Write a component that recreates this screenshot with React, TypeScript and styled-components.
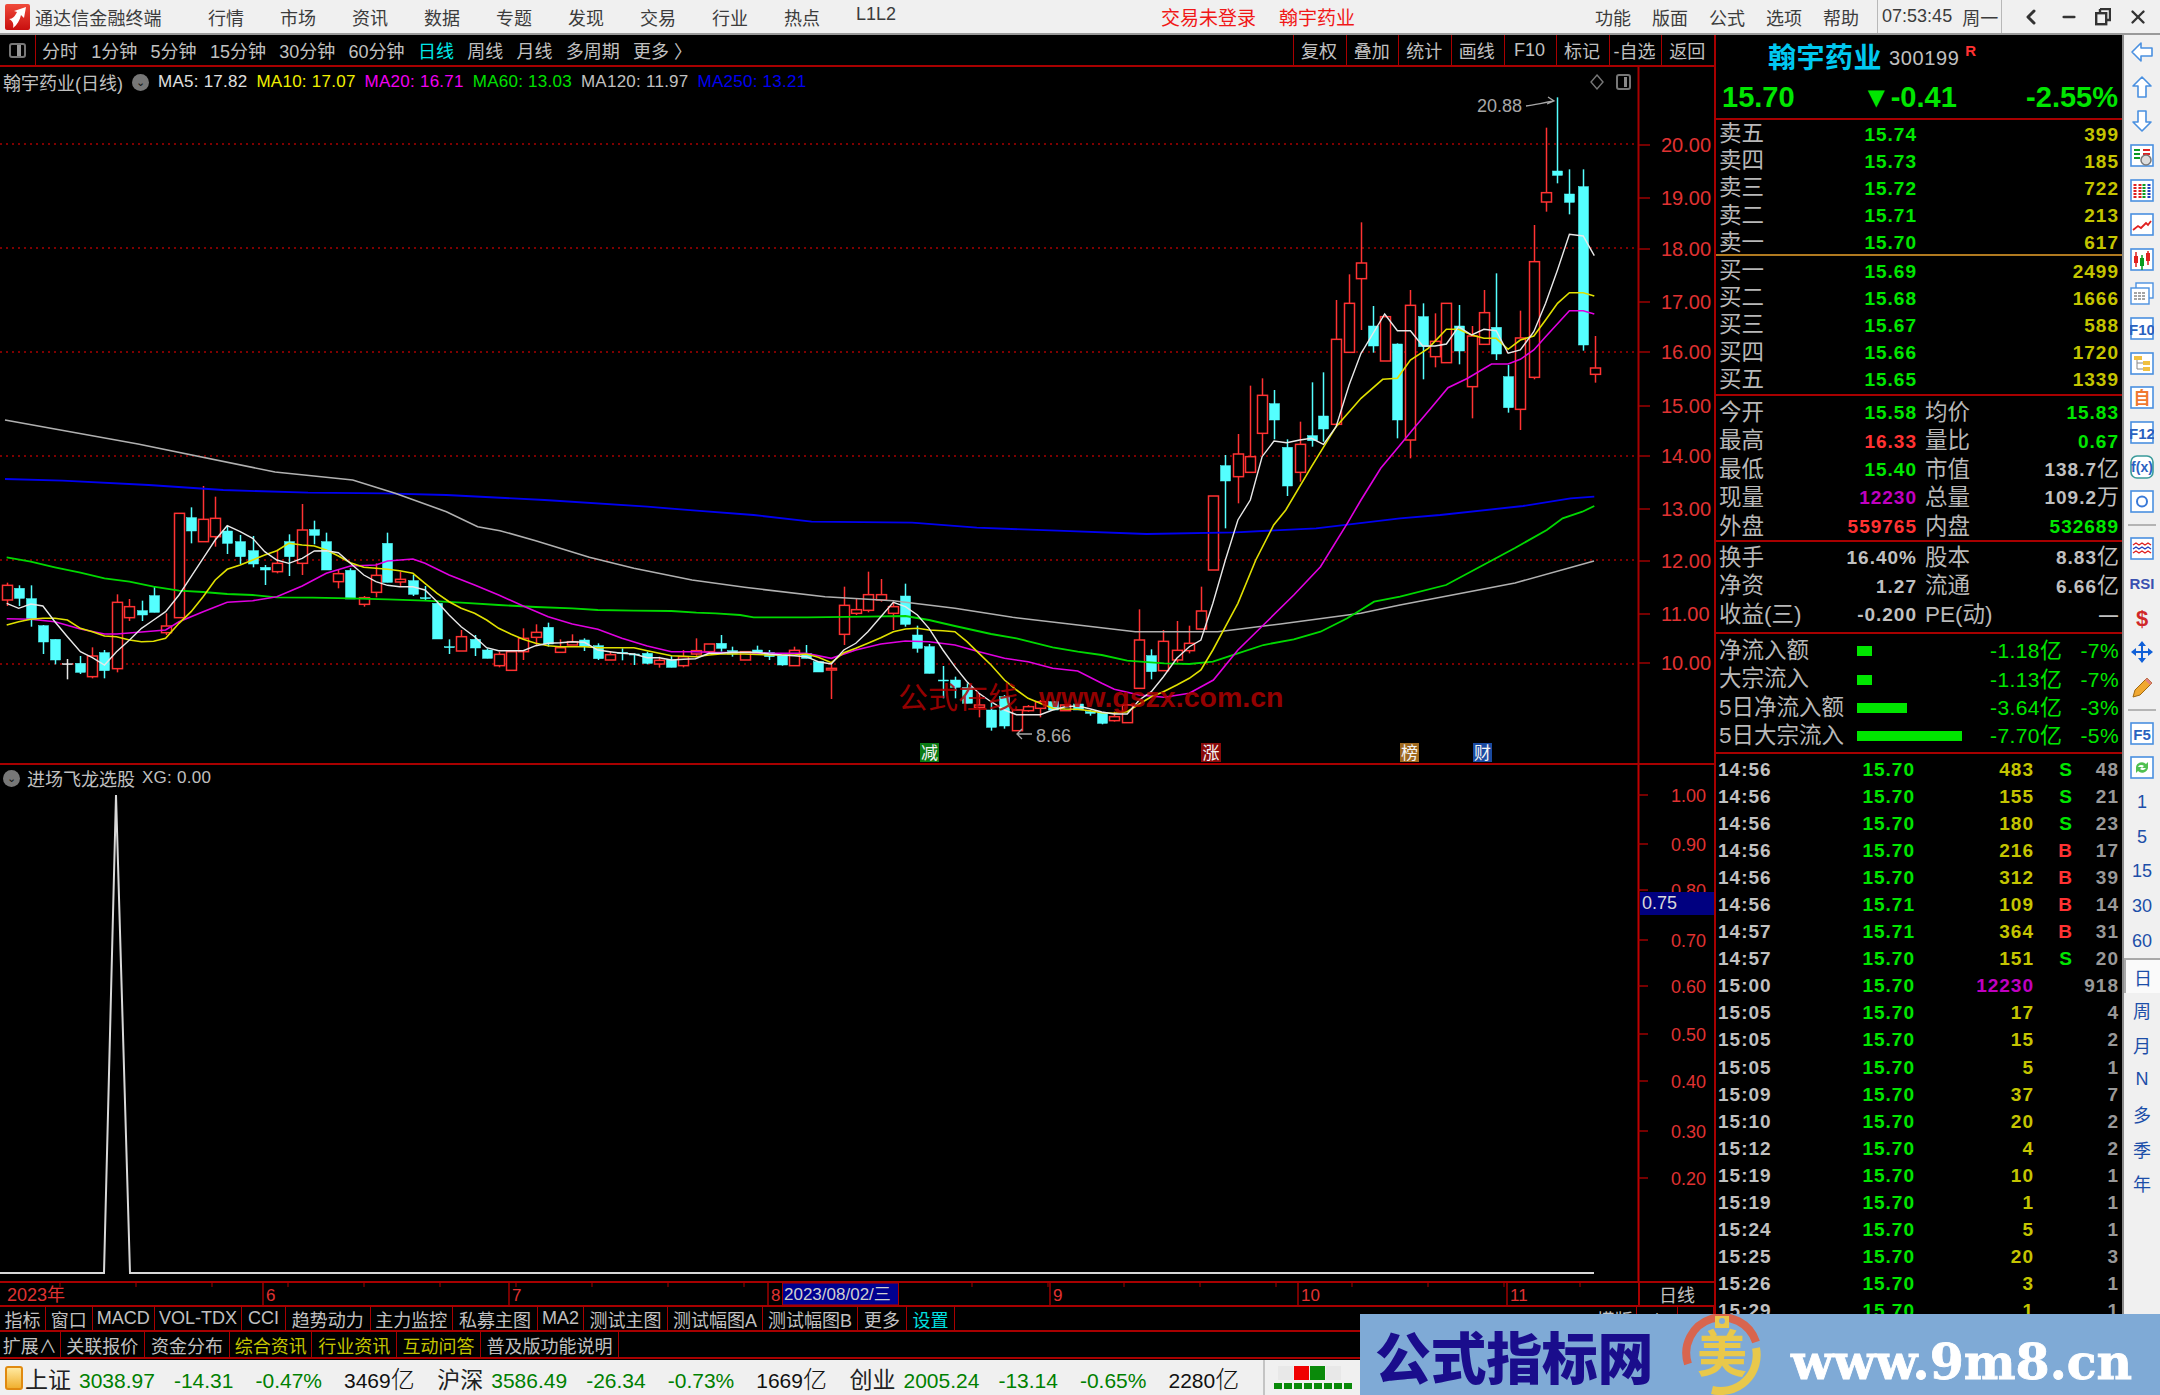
import React from 'react';
import styled, { createGlobalStyle } from 'styled-components';
import { ChevronLeft, Minus, X } from 'lucide-react';

const RED_LINE = '#a80000';
const GREY = '#c0c0c0';
const GREEN = '#00e600';
const YELLOW = '#c4c400';
const RED = '#ff3232';
const PURPLE = '#c000c0';
const CYAN = '#54ffff';
const SANS = '"Liberation Sans", "Noto Sans CJK SC", sans-serif';

const GlobalStyle = createGlobalStyle`
    html, body { margin: 0; padding: 0; background: #000; }
    body { font-family: ${SANS}; }
    * { box-sizing: border-box; }
`;

/* ---------- chart data, read off the picture (x, y in crop coordinates) ---------- */

type Candle = [number, 'r' | 'c' | 'w', number, number, number, number];
type Pt = [number, number];

const z8 = ([x, y]: Pt): Pt => [x / 2.24, 480 + y / 3];
const z9 = ([x, y]: Pt): Pt => [700 + x / 2.24, 480 + y / 3];
const z10 = ([x, y]: Pt): Pt => [1100 + x / 2.529, 90 + y / 3];

const candles8: Candle[] = [
    [15, 'r', 308, 316, 360, 378], [42, 'c', 316, 325, 355, 378], [69, 'c', 316, 356, 418, 440],
    [96, 'c', 435, 437, 486, 522], [123, 'c', 478, 478, 540, 553], [151, 'w', 537, 551, 553, 598],
    [180, 'c', 528, 550, 577, 582], [207, 'r', 502, 528, 590, 595], [234, 'c', 510, 518, 572, 595],
    [261, 'r', 343, 367, 566, 577], [290, 'r', 357, 380, 413, 423], [317, 'c', 362, 392, 405, 423],
    [344, 'c', 318, 347, 397, 397], [371, 'r', 400, 438, 458, 465], [401, 'r', 100, 100, 413, 413],
    [428, 'c', 82, 113, 153, 190], [455, 'r', 18, 118, 185, 185], [482, 'r', 50, 115, 170, 200],
    [509, 'c', 140, 153, 190, 222], [538, 'c', 165, 185, 230, 252], [566, 'c', 168, 212, 252, 262],
    [593, 'c', 255, 262, 270, 315], [620, 'r', 210, 250, 275, 280], [647, 'c', 163, 185, 230, 288],
    [677, 'r', 72, 150, 250, 285], [704, 'c', 122, 149, 166, 193], [731, 'c', 158, 185, 270, 270],
    [758, 'r', 270, 281, 305, 325], [785, 'c', 265, 271, 357, 357], [815, 'r', 348, 353, 373, 380],
    [842, 'r', 250, 286, 337, 352], [868, 'c', 158, 190, 307, 307], [895, 'r', 275, 298, 306, 320],
    [925, 'c', 285, 302, 343, 348], [952, 'c', 318, 353, 356, 362], [979, 'c', 362, 370, 477, 477],
    [1006, 'c', 478, 500, 503, 522], [1033, 'r', 450, 470, 513, 513], [1063, 'c', 465, 478, 504, 528],
    [1090, 'c', 505, 510, 535, 535], [1117, 'r', 515, 523, 557, 562], [1144, 'r', 515, 515, 571, 571],
    [1172, 'r', 445, 475, 515, 540], [1200, 'r', 433, 457, 472, 495], [1228, 'c', 428, 442, 492, 500],
    [1255, 'r', 478, 503, 517, 517], [1282, 'r', 463, 485, 495, 495], [1309, 'c', 475, 480, 500, 513],
    [1339, 'c', 490, 497, 536, 540], [1366, 'r', 515, 524, 540, 540], [1393, 'c', 505, 517, 520, 541],
    [1420, 'c', 520, 522, 524, 555], [1450, 'c', 515, 520, 550, 553], [1477, 'r', 530, 541, 552, 563],
    [1504, 'c', 528, 540, 562, 562], [1531, 'r', 510, 530, 557, 562], [1558, 'r', 475, 512, 522, 527],
];

const candles9: Candle[] = [
    [20, 'r', 492, 492, 515, 515], [46, 'c', 465, 490, 505, 515], [72, 'c', 500, 512, 522, 530],
    [100, 'r', 515, 515, 540, 540], [127, 'c', 497, 510, 522, 522], [155, 'c', 510, 517, 530, 540],
    [183, 'c', 527, 527, 555, 557], [211, 'r', 500, 511, 557, 557], [238, 'c', 495, 520, 535, 535],
    [265, 'c', 545, 545, 576, 576], [294, 'r', 548, 565, 570, 657], [322, 'r', 320, 376, 463, 495],
    [349, 'r', 357, 389, 400, 405], [376, 'r', 275, 344, 391, 397], [405, 'r', 297, 344, 360, 365],
    [433, 'r', 365, 380, 400, 450], [460, 'c', 311, 348, 433, 440], [487, 'c', 437, 465, 505, 518],
    [513, 'c', 492, 500, 580, 580], [544, 'c', 558, 600, 603, 655], [571, 'c', 590, 600, 622, 655],
    [598, 'c', 610, 622, 670, 670], [625, 'r', 640, 675, 682, 712], [652, 'c', 665, 690, 742, 752],
    [682, 'c', 645, 650, 738, 746], [709, 'r', 690, 690, 752, 752], [735, 'r', 675, 680, 692, 695],
    [762, 'r', 660, 665, 685, 712], [790, 'c', 665, 665, 690, 690], [818, 'r', 675, 675, 692, 692],
    [846, 'c', 672, 672, 690, 690], [873, 'c', 690, 695, 700, 707], [900, 'c', 697, 697, 730, 733],
    [928, 'r', 695, 710, 722, 725], [957, 'r', 672, 675, 728, 728], [984, 'r', 388, 480, 625, 625],
    [1011, 'c', 508, 527, 575, 598], [1038, 'r', 450, 484, 572, 572], [1068, 'r', 423, 511, 540, 548],
    [1096, 'r', 437, 490, 512, 520], [1122, 'r', 320, 393, 447, 447],
];

const candles10: Candle[] = [
    [285, 'r', 1218, 1218, 1440, 1440], [315, 'c', 1095, 1127, 1173, 1315], [348, 'r', 1032, 1092, 1160, 1240],
    [380, 'r', 887, 1100, 1147, 1147], [410, 'r', 865, 916, 1030, 1095], [440, 'c', 900, 941, 990, 1048],
    [472, 'c', 1048, 1072, 1188, 1218], [505, 'r', 995, 1063, 1147, 1175], [535, 'c', 877, 1037, 1052, 1070],
    [565, 'c', 847, 978, 1017, 1055], [597, 'r', 630, 748, 1003, 1003], [630, 'r', 553, 640, 787, 787],
    [660, 'r', 397, 519, 566, 720], [691, 'c', 648, 708, 768, 788], [722, 'r', 678, 680, 813, 813],
    [752, 'c', 760, 762, 990, 1045], [785, 'r', 600, 646, 1050, 1105], [816, 'c', 640, 680, 770, 868],
    [847, 'r', 670, 754, 800, 832], [876, 'r', 640, 640, 818, 818], [907, 'c', 645, 708, 783, 823],
    [940, 'r', 708, 738, 890, 985], [971, 'r', 600, 668, 763, 763], [1002, 'c', 550, 712, 792, 810],
    [1032, 'c', 825, 860, 953, 968], [1063, 'r', 662, 744, 958, 1020], [1097, 'r', 405, 515, 862, 868],
    [1127, 'r', 113, 308, 336, 365], [1157, 'c', 22, 243, 256, 280], [1187, 'c', 238, 312, 337, 373],
    [1222, 'c', 238, 290, 765, 782], [1252, 'r', 738, 834, 853, 878],
];

const ma5: Pt[] = [
    ...([[15, 370], [42, 385], [69, 372], [96, 378], [123, 425], [151, 470], [180, 515], [207, 533], [234, 555], [261, 515], [290, 480], [317, 445], [344, 420], [371, 395], [401, 345], [428, 290], [455, 235], [482, 180], [509, 137], [538, 155], [566, 175], [593, 215], [620, 240], [647, 250], [677, 235], [704, 213], [731, 212], [758, 218], [785, 250], [815, 285], [842, 305], [868, 316], [895, 320], [925, 320], [952, 330], [979, 365], [1006, 405], [1033, 440], [1063, 470], [1090, 503], [1117, 512], [1172, 512], [1200, 497], [1228, 490], [1255, 488], [1282, 485], [1309, 487], [1339, 510], [1366, 515], [1393, 520], [1420, 522], [1450, 533], [1477, 533], [1504, 540], [1531, 538], [1558, 536]] as Pt[]).map(z8),
    ...([[20, 520], [46, 520], [72, 517], [127, 517], [155, 522], [183, 525], [211, 527], [238, 530], [265, 545], [294, 552], [322, 510], [349, 490], [376, 455], [405, 410], [433, 367], [460, 380], [487, 405], [513, 445], [544, 510], [571, 560], [598, 605], [625, 640], [652, 665], [682, 690], [709, 704], [735, 704], [762, 704], [790, 690], [818, 680], [846, 678], [873, 686], [900, 696], [928, 702], [957, 702], [984, 660], [1011, 635], [1038, 590], [1068, 535], [1096, 500], [1122, 480], [1149, 370], [1177, 240], [1205, 120]] as Pt[]).map(z9),
    ...([[380, 1230], [410, 1100], [440, 1053], [472, 1058], [505, 1050], [535, 1045], [565, 1063], [597, 1010], [630, 885], [660, 790], [668, 775], [720, 672], [752, 722], [785, 722], [816, 768], [847, 768], [876, 762], [907, 710], [940, 735], [971, 718], [1002, 722], [1032, 790], [1063, 780], [1097, 725], [1127, 640], [1157, 540], [1187, 433], [1222, 438], [1250, 497]] as Pt[]).map(z10),
];

const ma10: Pt[] = [
    ...([[15, 435], [42, 425], [69, 418], [96, 415], [123, 415], [151, 420], [180, 445], [207, 455], [234, 468], [261, 470], [290, 480], [317, 485], [344, 484], [371, 475], [401, 430], [428, 395], [455, 350], [482, 300], [509, 268], [538, 255], [566, 240], [593, 225], [620, 212], [647, 190], [677, 195], [704, 198], [731, 210], [758, 228], [785, 248], [815, 262], [842, 265], [868, 268], [895, 272], [925, 280], [952, 310], [979, 340], [1006, 365], [1033, 385], [1063, 400], [1090, 420], [1117, 445], [1144, 462], [1172, 478], [1200, 490], [1228, 497], [1255, 500], [1309, 500], [1339, 503], [1420, 503], [1450, 512], [1477, 520], [1504, 527], [1558, 530]] as Pt[]).map(z8),
    ...([[20, 525], [46, 522], [100, 522], [155, 525], [211, 525], [238, 522], [265, 532], [294, 548], [322, 518], [349, 505], [376, 490], [405, 473], [433, 455], [460, 447], [487, 445], [513, 450], [544, 452], [571, 455], [598, 485], [625, 520], [652, 555], [682, 600], [709, 630], [735, 655], [762, 670], [790, 685], [818, 687], [846, 688], [873, 692], [900, 698], [928, 700], [957, 695], [984, 672], [1011, 650], [1038, 635], [1068, 615], [1096, 595], [1122, 570], [1149, 510], [1177, 440], [1205, 370], [1245, 240], [1285, 135]] as Pt[]).map(z9),
    ...([[470, 1260], [535, 1130], [597, 1010], [660, 925], [715, 868], [752, 865], [785, 810], [830, 775], [876, 718], [907, 718], [940, 735], [971, 745], [1002, 745], [1032, 778], [1063, 750], [1097, 738], [1127, 690], [1157, 640], [1187, 608], [1222, 608], [1250, 618]] as Pt[]).map(z10),
];

const ma20: Pt[] = [
    ...([[15, 416], [69, 418], [123, 425], [180, 447], [234, 462], [261, 462], [317, 456], [371, 450], [401, 425], [455, 395], [509, 367], [566, 362], [620, 350], [677, 318], [731, 280], [785, 258], [842, 255], [868, 243], [925, 237], [952, 250], [1006, 285], [1063, 315], [1117, 345], [1172, 378], [1228, 410], [1282, 432], [1339, 448], [1393, 475], [1450, 498], [1504, 515], [1558, 515]] as Pt[]).map(z8),
    ...([[20, 517], [100, 518], [155, 520], [238, 520], [294, 535], [349, 510], [405, 492], [460, 483], [513, 485], [571, 495], [625, 515], [682, 535], [735, 545], [790, 565], [846, 573], [900, 610], [928, 628], [984, 645], [1040, 652], [1096, 640], [1150, 600], [1205, 510], [1262, 435], [1330, 345], [1390, 260], [1450, 130]] as Pt[]).map(z9),
    ...([[660, 1230], [710, 1135], [752, 1075], [790, 1020], [840, 950], [880, 893], [930, 865], [990, 822], [1032, 822], [1063, 808], [1097, 780], [1127, 740], [1187, 662], [1222, 662], [1250, 672]] as Pt[]).map(z10),
];

const ma60: Pt[] = [
    ...([[15, 232], [69, 245], [123, 262], [180, 278], [234, 295], [290, 305], [344, 320], [401, 332], [455, 336], [509, 342], [566, 345], [620, 352], [700, 353], [785, 355], [868, 358], [952, 362], [1033, 368], [1117, 375], [1200, 381], [1282, 385], [1339, 390], [1420, 392], [1504, 393], [1560, 398]] as Pt[]).map(z8),
    ...([[35, 400], [90, 405], [120, 412], [240, 412], [376, 410], [460, 408], [513, 420], [571, 438], [652, 462], [709, 475], [790, 502], [846, 515], [900, 525], [957, 542], [1040, 550], [1096, 552], [1149, 545], [1205, 520], [1262, 495], [1330, 478], [1390, 455], [1450, 415], [1510, 365], [1568, 350]] as Pt[]).map(z9),
    [1446, 585], [1515, 548],
    ...([[1130, 1320], [1170, 1285], [1220, 1265], [1250, 1248]] as Pt[]).map(z10),
];

const ma120: Pt[] = [
    [5, 420], [138, 444], [275, 472],
    ...([[790, 0], [885, 40], [1000, 95], [1070, 140], [1120, 152], [1200, 182], [1320, 232], [1420, 265], [1550, 300]] as Pt[]).map(z8),
    ...([[100, 322], [280, 350], [433, 362], [571, 385], [700, 412], [880, 440], [975, 455], [1160, 455], [1300, 432], [1480, 400], [1568, 375]] as Pt[]).map(z9),
    [1515, 583], [1594, 561],
];

const ma250: Pt[] = [
    [5, 479],
    ...([[140, 2], [333, 15], [500, 30], [690, 38], [860, 40], [1000, 45], [1220, 60], [1450, 80], [1560, 92]] as Pt[]).map(z8),
    ...([[120, 105], [250, 125], [475, 128], [620, 143], [800, 152], [1000, 162], [1200, 157], [1380, 145], [1568, 115]] as Pt[]).map(z9),
    ...([[860, 1275], [1070, 1248], [1190, 1225], [1250, 1220]] as Pt[]).map(z10),
];

const toPoints = (pts: Pt[]) => pts.map(([x, y]) => `${x.toFixed(1)},${y.toFixed(1)}`).join(' ');

const allCandles = [
    ...candles8.map((c) => ({ c, f: z8 })),
    ...candles9.map((c) => ({ c, f: z9 })),
    ...candles10.map((c) => ({ c, f: z10 })),
];

/* ---------- page shell ---------- */

const Page = styled.div`
    position: relative;
    width: 2160px;
    height: 1395px;
    overflow: hidden;
    background: #000;
    display: flex;
    flex-direction: column;
    font-family: ${SANS};
`;

const TitleBar = styled.div`
    height: 35px;
    flex: none;
    display: flex;
    align-items: center;
    background: #f0f0f0;
    border-bottom: 2px solid #9a9a9a;
    color: #3c3c3c;
    font-size: 18px;
`;

const Logo = styled.svg`
    width: 25px;
    height: 26px;
    margin-left: 5px;
    flex: none;
`;

const AppName = styled.span`
    margin-left: 5px;
    width: 127px;
    letter-spacing: 0.1px;
    white-space: nowrap;
`;

const MainMenu = styled.div`
    display: flex;
    gap: 36px;
    margin-left: 46px;
    white-space: nowrap;
`;

const Notice = styled.div`
    margin-left: 265px;
    display: flex;
    gap: 23px;
    color: #f01818;
    font-size: 19px;
    white-space: nowrap;
`;

const SideMenu = styled.div`
    margin-left: 240px;
    display: flex;
    gap: 21px;
    white-space: nowrap;
`;

const ClockBox = styled.div`
    margin-left: 18px;
    height: 33px;
    width: 125px;
    padding-left: 4px;
    display: flex;
    align-items: center;
    border-left: 1px solid #b8b8b8;
    border-right: 1px solid #b8b8b8;
    white-space: nowrap;
`;

const ClockDay = styled.span`
    margin-left: 10px;
`;

const WinButtons = styled.div`
    flex: 1;
    display: flex;
    align-items: center;
    justify-content: space-around;
    padding: 0 2px 0 8px;
    color: #333;
`;

const Body = styled.div`
    height: 1325px;
    flex: none;
    display: flex;
`;

const ChartColumn = styled.div`
    width: 1716px;
    flex: none;
    display: flex;
    flex-direction: column;
    border-right: 2px solid ${RED_LINE};
`;

/* ---------- period bar ---------- */

const PeriodBar = styled.div`
    height: 32px;
    flex: none;
    display: flex;
    align-items: center;
    color: ${GREY};
    font-size: 18px;
    border-bottom: 2px solid ${RED_LINE};
`;

const LayoutToggle = styled.div`
    width: 36px;
    height: 100%;
    display: flex;
    align-items: center;
    justify-content: center;
    border-right: 1px solid ${RED_LINE};
`;

const ToggleGlyph = styled.span`
    display: block;
    width: 17px;
    height: 15px;
    border: 2px solid #777;
    border-radius: 3px;
    background: linear-gradient(90deg, transparent 50%, #999 50%, #999 80%, transparent 80%);
`;

const PeriodList = styled.div`
    display: flex;
    align-items: center;
    gap: 13.3px;
    margin-left: 6px;
    white-space: nowrap;
`;

const Period = styled.span<{ $active?: boolean }>`
    color: ${(p) => (p.$active ? '#00e8e8' : GREY)};
`;

const ChartActions = styled.div`
    margin-left: auto;
    display: flex;
    height: 100%;
`;

const ChartAction = styled.div`
    width: 52.6px;
    display: flex;
    align-items: center;
    justify-content: center;
    padding-right: 2px;
    border-left: 1px solid ${RED_LINE};
    white-space: nowrap;
`;

/* ---------- chart panes ---------- */

const MainPane = styled.div`
    position: relative;
    height: 698px;
    flex: none;
    border-bottom: 2px solid ${RED_LINE};
`;

const SubPane = styled.div`
    position: relative;
    height: 518px;
    flex: none;
    border-bottom: 2px solid ${RED_LINE};
`;

const PaneSvg = styled.svg`
    display: block;
    position: absolute;
    left: 0;
    top: 0;
`;

const Legend = styled.div`
    position: absolute;
    left: 3px;
    top: 2px;
    display: flex;
    align-items: center;
    font-size: 17px;
    letter-spacing: 0.25px;
    color: ${GREY};
    white-space: nowrap;
`;

const SubLegend = styled(Legend)`
    top: 0;
`;

const LegendName = styled.span`
    font-size: 18px;
    letter-spacing: 0;
`;

const FoldDot = styled.span`
    width: 17px;
    height: 17px;
    border-radius: 50%;
    background: #777;
    display: flex;
    align-items: center;
    justify-content: center;
    color: #111;
    font-size: 11px;
    line-height: 1;
`;

const MainFoldDot = styled(FoldDot)`
    margin-left: 9px;
`;

const MaValue = styled.span<{ $c: string; $gap?: number }>`
    color: ${(p) => p.$c};
    margin-left: ${(p) => p.$gap ?? 9}px;
`;

const AxisLabel = styled.text<{ $c?: string }>`
    fill: ${(p) => p.$c ?? '#e03232'};
    font-family: ${SANS};
    font-size: 20px;
`;

const SubAxisLabel = styled(AxisLabel)`
    font-size: 18px;
`;

const NoteLabel = styled.text`
    fill: #a8a8a8;
    font-family: ${SANS};
    font-size: 18px;
`;

const SiteMark = styled.text`
    fill: #b40000;
    font-family: ${SANS};
    font-size: 28.5px;
    font-weight: 700;
`;

const SiteMarkCn = styled.text`
    fill: #b40000;
    font-family: ${SANS};
    font-size: 30px;
`;

const MarkerText = styled.text`
    fill: #f4f4f4;
    font-family: ${SANS};
    font-size: 17px;
    text-anchor: middle;
`;

const DateRow = styled.div`
    height: 24px;
    flex: none;
    display: flex;
    border-bottom: 2px solid ${RED_LINE};
`;

const DateSvg = styled.svg`
    display: block;
    flex: none;
`;

const DateText = styled.text<{ $c?: string; $size?: number }>`
    fill: ${(p) => p.$c ?? '#e03232'};
    font-family: ${SANS};
    font-size: ${(p) => p.$size ?? 17}px;
`;

const DateCycle = styled.div`
    flex: 1;
    border-left: 2px solid ${RED_LINE};
    display: flex;
    align-items: center;
    justify-content: center;
    color: ${GREY};
    font-size: 18px;
`;

const TabRow = styled.div<{ $h: number }>`
    height: ${(p) => p.$h}px;
    flex: none;
    display: flex;
    border-bottom: 2px solid ${RED_LINE};
    font-size: 18px;
    color: ${GREY};
`;

const Tab = styled.div<{ $w: number; $c?: string; $end?: boolean }>`
    width: ${(p) => p.$w}px;
    flex: none;
    display: flex;
    align-items: center;
    justify-content: center;
    color: ${(p) => p.$c ?? GREY};
    border-right: 1px solid ${RED_LINE};
    margin-left: ${(p) => (p.$end ? 'auto' : 0)};
    white-space: nowrap;
    overflow: hidden;
`;

/* ---------- quote panel ---------- */

const QuotePanel = styled.div`
    width: 406px;
    flex: none;
    display: flex;
    flex-direction: column;
    overflow: hidden;
    font-size: 19px;
    color: ${GREY};
`;

const StockHead = styled.div`
    height: 41px;
    flex: none;
    display: flex;
    align-items: center;
    padding-left: 52px;
    white-space: nowrap;
`;

const StockName = styled.span`
    color: #00c8f0;
    font-size: 28px;
    font-weight: 700;
    letter-spacing: 0.5px;
`;

const StockCode = styled.span`
    margin-left: 7px;
    margin-top: 6px;
    font-size: 20px;
    letter-spacing: 0.6px;
    color: ${GREY};
`;

const RFlag = styled.span`
    margin-left: 6px;
    margin-top: -10px;
    color: ${RED};
    font-size: 15px;
    font-weight: 700;
`;

const PriceRow = styled.div`
    height: 44px;
    flex: none;
    display: grid;
    grid-template-columns: 78px 1fr auto;
    align-items: center;
    padding: 0 4px 0 6px;
    color: ${GREEN};
    font-size: 29px;
    font-weight: 700;
    border-bottom: 2px solid ${RED_LINE};
`;

const PriceDelta = styled.span`
    margin-left: 62px;
`;

const Section = styled.div<{ $rule?: string; $top?: number; $rh: number; $h: number }>`
    height: ${(p) => p.$h}px;
    flex: none;
    padding: ${(p) => p.$top ?? 0}px 3px 0 3px;
    display: grid;
    grid-auto-rows: ${(p) => p.$rh}px;
    border-bottom: ${(p) => p.$rule ?? `2px solid ${RED_LINE}`};
`;

const BookRow = styled.div`
    display: grid;
    grid-template-columns: 62px 136px 1fr;
    align-items: center;
`;

const Label = styled.span`
    font-size: 22.5px;
    line-height: 1;
    color: #b8b8b8;
    white-space: nowrap;
`;

const Num = styled.span<{ $c?: string; $left?: boolean }>`
    text-align: ${(p) => (p.$left ? 'left' : 'right')};
    color: ${(p) => p.$c ?? GREY};
    font-size: 19px;
    font-weight: 700;
    letter-spacing: 1px;
    white-space: nowrap;
`;

const StatRow = styled.div`
    display: grid;
    grid-template-columns: 62px 136px 8px 62px 1fr;
    align-items: center;
`;

const Unit = styled.span`
    font-size: 22px;
    font-weight: 400;
    letter-spacing: 0;
    line-height: 0;
`;

const FlowRow = styled.div`
    display: grid;
    grid-template-columns: 138px 133px 70px 1fr;
    align-items: center;
`;

const FlowBar = styled.span<{ $w: number }>`
    display: block;
    height: 10px;
    width: ${(p) => p.$w}px;
    background: ${GREEN};
`;

const FlowNum = styled.span`
    text-align: right;
    color: ${GREEN};
    font-size: 21px;
    letter-spacing: 0.4px;
    white-space: nowrap;
`;

const TickList = styled.div`
    flex: 1;
    min-height: 0;
    overflow: hidden;
    padding: 2px 3px 0 2px;
    display: grid;
    grid-auto-rows: 27.1px;
`;

const TickRow = styled.div`
    display: grid;
    grid-template-columns: 62px 135px 119px 38px 1fr;
    align-items: center;
`;

const TickSide = styled.span<{ $buy: boolean }>`
    text-align: right;
    color: ${(p) => (p.$buy ? RED : GREEN)};
    font-size: 19px;
    font-weight: 700;
`;

/* ---------- right tool strip ---------- */

const SideStrip = styled.div`
    flex: 1;
    display: flex;
    flex-direction: column;
    align-items: center;
    background: #f0f0f0;
    border-left: 2px solid #8a8a8a;
`;

const StripSlot = styled.div<{ $on?: boolean }>`
    width: 100%;
    height: 34.6px;
    flex: none;
    display: flex;
    align-items: center;
    justify-content: center;
    color: #1c4ea8;
    font-size: 18px;
    background: ${(p) => (p.$on ? '#fafafa' : 'transparent')};
    border-top: ${(p) => (p.$on ? '2px solid #a8a8a8' : 'none')};
    border-left: ${(p) => (p.$on ? '2px solid #a8a8a8' : 'none')};
`;

const StripRule = styled.div`
    width: 28px;
    height: 2px;
    margin: 5px 0;
    flex: none;
    background: #b4b4b4;
`;

const StripIcon = styled.svg`
    width: 24px;
    height: 24px;
    display: block;
`;

const IconText = styled.text<{ $c?: string; $size?: number }>`
    fill: ${(p) => p.$c ?? '#2a62c0'};
    font-family: ${SANS};
    font-size: ${(p) => p.$size ?? 14}px;
    font-weight: 700;
    text-anchor: middle;
`;

/* ---------- status bar and banner ---------- */

const StatusBar = styled.div`
    height: 35px;
    flex: none;
    display: flex;
    align-items: center;
    background: #f0f0f0;
    font-size: 21px;
    color: #111;
    white-space: nowrap;
`;

const IndexGlyph = styled.span`
    width: 18px;
    height: 24px;
    margin: 0 2px 0 5px;
    flex: none;
    border: 2px solid #e08a10;
    border-radius: 3px;
    background: linear-gradient(#ffe9a0, #f0b030);
`;

const IndexGroup = styled.div`
    display: flex;
    align-items: baseline;
    margin-right: 22.5px;
`;

const IndexName = styled.span`
    font-size: 23px;
    color: #222;
    margin-right: 8px;
`;

const IndexNum = styled.span<{ $gap: number }>`
    color: #008000;
    margin-right: ${(p) => p.$gap}px;
`;

const IndexUnit = styled.span`
    font-size: 24px;
    font-weight: 300;
`;

const StatusRule = styled.span`
    width: 2px;
    height: 35px;
    margin-left: 1px;
    background: #c4c4c4;
`;

const BreadthBox = styled.div`
    margin-left: 9px;
    display: flex;
    flex-direction: column;
    gap: 3px;
`;

const BreadthTop = styled.div`
    display: flex;
    gap: 1px;
    margin-left: 4px;
`;

const BreadthCell = styled.span<{ $c: string }>`
    width: 15px;
    height: 14px;
    background: ${(p) => p.$c};
`;

const BreadthDashes = styled.div`
    display: flex;
    gap: 2px;
`;

const Dash = styled.span`
    width: 8px;
    height: 6px;
    background: #0a8a0a;
`;

const Banner = styled.div`
    position: absolute;
    right: 0;
    bottom: 0;
    width: 800px;
    height: 81px;
    background: #7faad6;
    display: flex;
    align-items: center;
    padding-left: 15px;
    white-space: nowrap;
`;

const BannerTitle = styled.span`
    width: 290px;
    color: #1a0d8c;
    font-family: "Noto Sans CJK SC", sans-serif;
    font-size: 56px;
    font-weight: 900;
    line-height: 1;
    letter-spacing: -0.4px;
`;

const Medal = styled.svg`
    width: 80px;
    height: 81px;
    margin-left: 17px;
    flex: none;
`;

const BannerUrl = styled.span`
    margin-left: 29px;
    color: #fff;
    font-family: "DejaVu Serif", serif;
    font-size: 49px;
    font-weight: 700;
    margin-top: 14px;
    -webkit-text-stroke: 0.8px #fff;
`;

/* ---------- small drawings ---------- */

const AppLogo = () => (
    <Logo viewBox="0 0 25 26">
        <defs>
            <linearGradient id="lg" x1="0" y1="0" x2="0" y2="1">
                <stop offset="0" stopColor="#f04a3a" />
                <stop offset="1" stopColor="#c80f0f" />
            </linearGradient>
        </defs>
        <rect width="25" height="26" rx="2" fill="url(#lg)" />
        <path d="M4 15 C8 15 10 12 12 8 L9 7 L21 3 L19 14 L16 11 C15 16 12 21 8 24 C9 20 8 17 4 15 Z" fill="#fff" />
    </Logo>
);

const Box = ({ children }: { children?: React.ReactNode }) => (
    <StripIcon viewBox="0 0 24 24">
        <rect x="1" y="1" width="22" height="21" fill="#fff" stroke="#4a90e0" strokeWidth="1.6" />
        {children}
    </StripIcon>
);

const Arrow = ({ d }: { d: string }) => (
    <StripIcon viewBox="0 0 24 24">
        <path d={d} fill="#fff" stroke="#4a90e0" strokeWidth="1.6" strokeLinejoin="round" />
    </StripIcon>
);

const stripIcons: React.ReactNode[] = [
    <Box key="a">
        <path d="M4 6h6M4 10h6M4 14h6" stroke="#0a9a20" strokeWidth="2" />
        <path d="M13 6h7M13 10h7" stroke="#e02020" strokeWidth="2" />
        <circle cx="16" cy="16" r="5" fill="#ddd" stroke="#777" strokeWidth="1.5" />
    </Box>,
    <Box key="b">
        <path d="M5 5v14M10 5v14" stroke="#e02020" strokeWidth="3" strokeDasharray="2 1" />
        <path d="M14 5v14" stroke="#0a9a20" strokeWidth="3" strokeDasharray="2 1" />
        <path d="M19 5v14" stroke="#2040c0" strokeWidth="3" strokeDasharray="2 1" />
    </Box>,
    <Box key="c">
        <path d="M3 17l5-4 3 2 5-5 2 2 3-4" fill="none" stroke="#e02020" strokeWidth="1.8" />
    </Box>,
    <Box key="d">
        <path d="M6 4v15M18 3v14" stroke="#e02020" strokeWidth="1.5" />
        <path d="M12 7v15" stroke="#0a9a20" strokeWidth="1.5" />
        <rect x="4" y="8" width="4" height="7" fill="#e02020" />
        <rect x="10" y="10" width="4" height="8" fill="#0a9a20" />
        <rect x="16" y="5" width="4" height="8" fill="#e02020" />
    </Box>,
    <StripIcon key="e" viewBox="0 0 24 24">
        <rect x="6" y="1" width="17" height="15" fill="#fff" stroke="#4a90e0" strokeWidth="1.4" />
        <rect x="1" y="6" width="18" height="16" fill="#fff" stroke="#4a90e0" strokeWidth="1.4" />
        <path d="M4 11h12M4 14h12M4 17h12" stroke="#888" strokeWidth="1.6" strokeDasharray="3 1" />
    </StripIcon>,
    <Box key="f"><IconText x="12" y="17.5" $size={15}>F10</IconText></Box>,
    <Box key="g">
        <path d="M7 7v10h6M7 11h6" fill="none" stroke="#888" />
        <rect x="4" y="4" width="8" height="4" fill="#f0c040" />
        <rect x="13" y="9" width="7" height="4" fill="#f0c040" />
        <rect x="13" y="15" width="7" height="4" fill="#f0c040" />
    </Box>,
    <Box key="h"><IconText x="12" y="18" $c="#f07830" $size={17}>自</IconText></Box>,
    <Box key="i"><IconText x="12" y="17.5" $size={15}>F12</IconText></Box>,
    <StripIcon key="j" viewBox="0 0 24 24">
        <rect x="1" y="1" width="22" height="22" rx="6" fill="#fff" stroke="#3a9a9a" strokeWidth="1.6" />
        <IconText x="12" y="17" $size={14}>f(x)</IconText>
    </StripIcon>,
    <Box key="k"><circle cx="12" cy="11.5" r="5" fill="none" stroke="#3a7ad8" strokeWidth="2" /></Box>,
];

const stripIcons2: React.ReactNode[] = [
    <Box key="a">
        <path d="M3 8l3-2 3 2 3-2 3 2 3-2 3 2" fill="none" stroke="#e02020" strokeWidth="1.4" />
        <path d="M3 12l3-2 3 2 3-2 3 2 3-2 3 2" fill="none" stroke="#2040c0" strokeWidth="1.4" />
        <path d="M3 16l3-2 3 2 3-2 3 2 3-2 3 2" fill="none" stroke="#e02020" strokeWidth="1.4" />
    </Box>,
    <StripIcon key="b" viewBox="0 0 24 24"><IconText x="12" y="18" $c="#3a50b0" $size={15}>RSI</IconText></StripIcon>,
    <StripIcon key="c" viewBox="0 0 24 24"><IconText x="12" y="20" $c="#d02828" $size={22}>$</IconText></StripIcon>,
    <StripIcon key="d" viewBox="0 0 24 24">
        <path d="M12 1l4 5h-3v5h5V8l5 4-5 4v-3h-5v5h3l-4 5-4-5h3v-5H6v3l-5-4 5-4v3h5V6H8z" fill="#1060d8" />
    </StripIcon>,
    <StripIcon key="e" viewBox="0 0 24 24">
        <path d="M3 22l2-7L17 3l5 5L10 20z" fill="#f0a830" stroke="#a06810" />
        <path d="M17 3l5 5-2 2-5-5z" fill="#e08080" />
    </StripIcon>,
];

const stripIcons3: React.ReactNode[] = [
    <Box key="a"><IconText x="12" y="17.5" $size={15}>F5</IconText></Box>,
    <Box key="b">
        <path d="M6 11a6 6 0 0 1 10-3l2-2v6h-6l2-2a4 4 0 0 0-6 1z" fill="#50c050" />
        <path d="M18 12a6 6 0 0 1-10 3l-2 2v-6h6l-2 2a4 4 0 0 0 6-1z" fill="#50c050" />
    </Box>,
];

const RestoreIcon = () => (
    <svg width="16" height="18" viewBox="0 0 16 18">
        <path d="M5 1h10v11h-3M5 1v3" fill="none" stroke="#333" strokeWidth="2.4" />
        <rect x="1.2" y="5.2" width="10" height="11" fill="none" stroke="#333" strokeWidth="2.4" />
    </svg>
);

/* ---------- content ---------- */

const mainMenu = ['行情', '市场', '资讯', '数据', '专题', '发现', '交易', '行业', '热点', 'L1L2'];
const periods = ['分时', '1分钟', '5分钟', '15分钟', '30分钟', '60分钟', '日线', '周线', '月线', '多周期', '更多 〉'];
const actions = ['复权', '叠加', '统计', '画线', 'F10', '标记', '-自选', '返回'];

const askRows = [['卖五', '15.74', '399'], ['卖四', '15.73', '185'], ['卖三', '15.72', '722'], ['卖二', '15.71', '213'], ['卖一', '15.70', '617']];
const bidRows = [['买一', '15.69', '2499'], ['买二', '15.68', '1666'], ['买三', '15.67', '588'], ['买四', '15.66', '1720'], ['买五', '15.65', '1339']];

const ticks: [string, string, string, string, string][] = [
    ['14:56', '15.70', '483', 'S', '48'], ['14:56', '15.70', '155', 'S', '21'], ['14:56', '15.70', '180', 'S', '23'],
    ['14:56', '15.70', '216', 'B', '17'], ['14:56', '15.70', '312', 'B', '39'], ['14:56', '15.71', '109', 'B', '14'],
    ['14:57', '15.71', '364', 'B', '31'], ['14:57', '15.70', '151', 'S', '20'], ['15:00', '15.70', '12230', '', '918'],
    ['15:05', '15.70', '17', '', '4'], ['15:05', '15.70', '15', '', '2'], ['15:05', '15.70', '5', '', '1'],
    ['15:09', '15.70', '37', '', '7'], ['15:10', '15.70', '20', '', '2'], ['15:12', '15.70', '4', '', '2'],
    ['15:19', '15.70', '10', '', '1'], ['15:19', '15.70', '1', '', '1'], ['15:24', '15.70', '5', '', '1'],
    ['15:25', '15.70', '20', '', '3'], ['15:26', '15.70', '3', '', '1'], ['15:29', '15.70', '1', '', '1'],
];

const flows: [string, number, string, string][] = [
    ['净流入额', 15, '-1.18', '-7%'], ['大宗流入', 15, '-1.13', '-7%'],
    ['5日净流入额', 50, '-3.64', '-3%'], ['5日大宗流入', 105, '-7.70', '-5%'],
];

const tabs1: [string, number, string?][] = [
    ['指标', 46], ['窗口', 46.5], ['MACD', 62.5], ['VOL-TDX', 87], ['CCI', 44], ['趋势动力', 84.5], ['主力监控', 82.5],
    ['私募主图', 85], ['MA2', 46], ['测试主图', 84], ['测试幅图A', 95], ['测试幅图B', 95], ['更多', 49], ['设置', 48, '#00e0e0'],
];
const tabs2: [string, number, string?][] = [
    ['扩展∧', 60.6], ['关联报价', 84.4], ['资金分布', 85], ['综合资讯', 82.5, YELLOW], ['行业资讯', 84.5, YELLOW],
    ['互动问答', 84, YELLOW], ['普及版功能说明', 138],
];

const priceY = (p: number) => 144 + (20 - p) * 52;
const yAxis: [string, number][] = [
    ['20.00', 145], ['19.00', 198], ['18.00', 249], ['17.00', 302], ['16.00', 352], ['15.00', 406],
    ['14.00', 456], ['13.00', 509], ['12.00', 561], ['11.00', 614], ['10.00', 663],
];
const subAxis: [string, number][] = [
    ['1.00', 795], ['0.90', 844], ['0.80', 890], ['0.70', 940], ['0.60', 986], ['0.50', 1034], ['0.40', 1081], ['0.30', 1131], ['0.20', 1178],
];

const MainChart = () => (
    <PaneSvg width="1714" height="696" viewBox="0 67 1714 696">
        {[20, 18, 16, 14, 12, 10].map((p) => (
            <line key={p} x1="0" x2="1638" y1={priceY(p)} y2={priceY(p)} stroke="#a80000" strokeWidth="1.4" strokeDasharray="2 4" />
        ))}
        <line x1="1638.5" x2="1638.5" y1="67" y2="763" stroke={RED_LINE} strokeWidth="2" />
        {yAxis.map(([t, y]) => (
            <g key={t}>
                <line x1="1638" x2="1650" y1={y} y2={y} stroke={RED_LINE} strokeWidth="1.4" />
                <AxisLabel x="1661" y={y + 7}>{t}</AxisLabel>
            </g>
        ))}
        {allCandles.map(({ c, f }, i) => {
            const [zx, kind, wt, bt, bb, wb] = c;
            const [rawX, top] = f([zx, wt]);
            const x = Math.round(rawX) + 0.5;
            const yb = f([zx, bt])[1];
            const ye = f([zx, bb])[1];
            const low = f([zx, wb])[1];
            const color = kind === 'r' ? RED : kind === 'c' ? CYAN : '#e8e8e8';
            return (
                <g key={i}>
                    <line x1={x} x2={x} y1={top} y2={low} stroke={color} strokeWidth="1.5" />
                    <rect
                        x={x - 5}
                        y={yb}
                        width="10"
                        height={Math.max(ye - yb, 1)}
                        fill={kind === 'r' ? '#000' : color}
                        stroke={color}
                        strokeWidth={kind === 'r' ? 1.5 : 0.5}
                    />
                </g>
            );
        })}
        <polyline points={toPoints(ma250)} fill="none" stroke="#0000f0" strokeWidth="1.8" />
        <polyline points={toPoints(ma120)} fill="none" stroke="#b0b0b0" strokeWidth="1.6" />
        <polyline points={toPoints(ma60)} fill="none" stroke="#00d800" strokeWidth="1.8" />
        <polyline points={toPoints(ma20)} fill="none" stroke="#e000e0" strokeWidth="1.6" />
        <polyline points={toPoints(ma10)} fill="none" stroke="#e0e000" strokeWidth="1.6" />
        <polyline points={toPoints(ma5)} fill="none" stroke="#e8e8e8" strokeWidth="1.4" />

        <SiteMarkCn x="898" y="708" opacity="0.82">公式在线</SiteMarkCn>
        <SiteMark x="1039" y="707" opacity="0.82">www.gszx.com.cn</SiteMark>

        <NoteLabel x="1477" y="112">20.88</NoteLabel>
        <path d="M1526 106c8-1 16-3 28-5m-6-4l6 4-7 3" fill="none" stroke="#a8a8a8" strokeWidth="1.3" />
        <path d="M1032 734h-15m5-5l-5 5 5 5" fill="none" stroke="#a8a8a8" strokeWidth="1.3" />
        <NoteLabel x="1036" y="742">8.66</NoteLabel>

        <path d="M1597 75l6 7-6 7-6-7z" fill="none" stroke="#777" strokeWidth="1.4" />
        <rect x="1617" y="75" width="13" height="14" rx="2" fill="none" stroke="#777" strokeWidth="2" />
        <rect x="1624" y="77" width="3" height="10" fill="#888" />

        <rect x="920" y="743" width="19" height="19" fill="#0a7a14" />
        <MarkerText x="929.5" y="758.5">减</MarkerText>
        <rect x="1201" y="743" width="20" height="19" fill="#8a0a0a" />
        <MarkerText x="1211" y="758.5">涨</MarkerText>
        <rect x="1400" y="743" width="19" height="19" fill="#a06a20" />
        <MarkerText x="1409.5" y="758.5">榜</MarkerText>
        <rect x="1473" y="743" width="19" height="19" fill="#1a4aa0" />
        <MarkerText x="1482.5" y="758.5">财</MarkerText>
    </PaneSvg>
);

const SubChart = () => (
    <PaneSvg width="1714" height="516" viewBox="0 765 1714 516">
        <line x1="1638.5" x2="1638.5" y1="765" y2="1281" stroke="#c00000" strokeWidth="2" />
        {subAxis.map(([t, y]) => (
            <g key={t}>
                <line x1="1638" x2="1648" y1={y} y2={y} stroke={RED_LINE} strokeWidth="1.4" />
                <SubAxisLabel x="1671" y={y + 7}>{t}</SubAxisLabel>
            </g>
        ))}
        <rect x="1640" y="892" width="74" height="23" fill="#000080" />
        <SubAxisLabel x="1642" y="909" $c="#d8d8d8">0.75</SubAxisLabel>
        <path d="M0 1273H104L116 795L130 1273H1594" fill="none" stroke="#d8d8d8" strokeWidth="2" />
    </PaneSvg>
);

const monthTicks: [number, string][] = [[263, '6'], [509, '7'], [768, '8'], [1050, '9'], [1298, '10'], [1507, '11']];

const DateAxis = () => (
    <DateSvg width="1638" height="22" viewBox="0 0 1638 22">
        {Array.from({ length: 21 }, (_, i) => 60 + i * 76).map((x) => (
            <line key={x} x1={x} x2={x} y1="0" y2="4" stroke={RED_LINE} />
        ))}
        <DateText x="7" y="18" $size={18}>2023年</DateText>
        {monthTicks.map(([x, t]) => (
            <g key={t}>
                <line x1={x} x2={x} y1="0" y2="22" stroke={RED_LINE} strokeWidth="1.4" />
                <DateText x={x + 3} y="18">{t}</DateText>
            </g>
        ))}
        <rect x="782.5" y="0" width="116" height="22" fill="#000090" stroke={RED_LINE} />
        <DateText x="784" y="17" $c="#d0d0d0">2023/08/02/三</DateText>
    </DateSvg>
);

const indices = [
    ['上证', '3038.97', '-14.31', '-0.47%', '3469'],
    ['沪深', '3586.49', '-26.34', '-0.73%', '1669'],
    ['创业', '2005.24', '-13.14', '-0.65%', '2280'],
];

export default function App() {
    return (
        <Page>
            <GlobalStyle />
            <TitleBar>
                <AppLogo />
                <AppName>通达信金融终端</AppName>
                <MainMenu>
                    {mainMenu.map((m) => <span key={m}>{m}</span>)}
                </MainMenu>
                <Notice>
                    <span>交易未登录</span>
                    <span>翰宇药业</span>
                </Notice>
                <SideMenu>
                    {['功能', '版面', '公式', '选项', '帮助'].map((m) => <span key={m}>{m}</span>)}
                </SideMenu>
                <ClockBox>
                    07:53:45<ClockDay>周一</ClockDay>
                </ClockBox>
                <WinButtons>
                    <ChevronLeft size={24} strokeWidth={3} />
                    <Minus size={18} strokeWidth={3.5} />
                    <RestoreIcon />
                    <X size={22} strokeWidth={2.6} />
                </WinButtons>
            </TitleBar>

            <Body>
                <ChartColumn>
                    <PeriodBar>
                        <LayoutToggle><ToggleGlyph /></LayoutToggle>
                        <PeriodList>
                            {periods.map((p) => <Period key={p} $active={p === '日线'}>{p}</Period>)}
                        </PeriodList>
                        <ChartActions>
                            {actions.map((a) => <ChartAction key={a}>{a}</ChartAction>)}
                        </ChartActions>
                    </PeriodBar>

                    <MainPane>
                        <MainChart />
                        <Legend>
                            <LegendName>翰宇药业(日线)</LegendName>
                            <MainFoldDot>⌄</MainFoldDot>
                            <MaValue $c="#e0e0e0">MA5: 17.82</MaValue>
                            <MaValue $c="#f0f000">MA10: 17.07</MaValue>
                            <MaValue $c="#f000f0">MA20: 16.71</MaValue>
                            <MaValue $c="#00e000">MA60: 13.03</MaValue>
                            <MaValue $c="#c0c0c0">MA120: 11.97</MaValue>
                            <MaValue $c="#0000f0">MA250: 13.21</MaValue>
                        </Legend>
                    </MainPane>

                    <SubPane>
                        <SubChart />
                        <SubLegend>
                            <FoldDot>⌄</FoldDot>
                            <MaValue $c={GREY} $gap={7}><LegendName>进场飞龙选股</LegendName></MaValue>
                            <MaValue $c={GREY} $gap={7}>XG: 0.00</MaValue>
                        </SubLegend>
                    </SubPane>

                    <DateRow>
                        <DateAxis />
                        <DateCycle>日线</DateCycle>
                    </DateRow>

                    <TabRow $h={25}>
                        {tabs1.map(([t, w, c]) => <Tab key={t} $w={w} $c={c}>{t}</Tab>)}
                        <Tab $end $w={44}>模版</Tab>
                        <Tab $w={41}>+</Tab>
                        <Tab $w={36} />
                    </TabRow>

                    <TabRow $h={27}>
                        {tabs2.map(([t, w, c]) => <Tab key={t} $w={w} $c={c}>{t}</Tab>)}
                    </TabRow>
                </ChartColumn>

                <QuotePanel>
                    <StockHead>
                        <StockName>翰宇药业</StockName>
                        <StockCode>300199</StockCode>
                        <RFlag>R</RFlag>
                    </StockHead>
                    <PriceRow>
                        <span>15.70</span>
                        <PriceDelta>▼-0.41</PriceDelta>
                        <span>-2.55%</span>
                    </PriceRow>

                    <Section $h={136} $rh={27.1} $top={1} $rule="2px solid #b07a20">
                        {askRows.map(([l, p, q]) => (
                            <BookRow key={l}>
                                <Label>{l}</Label>
                                <Num $c={GREEN}>{p}</Num>
                                <Num $c={YELLOW}>{q}</Num>
                            </BookRow>
                        ))}
                    </Section>
                    <Section $h={140} $rh={27.1} $top={2}>
                        {bidRows.map(([l, p, q]) => (
                            <BookRow key={l}>
                                <Label>{l}</Label>
                                <Num $c={GREEN}>{p}</Num>
                                <Num $c={YELLOW}>{q}</Num>
                            </BookRow>
                        ))}
                    </Section>

                    <Section $h={146} $rh={28.4} $top={3}>
                        <StatRow><Label>今开</Label><Num $c={GREEN}>15.58</Num><i /><Label>均价</Label><Num $c={GREEN}>15.83</Num></StatRow>
                        <StatRow><Label>最高</Label><Num $c={RED}>16.33</Num><i /><Label>量比</Label><Num $c={GREEN}>0.67</Num></StatRow>
                        <StatRow><Label>最低</Label><Num $c={GREEN}>15.40</Num><i /><Label>市值</Label><Num>138.7<Unit>亿</Unit></Num></StatRow>
                        <StatRow><Label>现量</Label><Num $c={PURPLE}>12230</Num><i /><Label>总量</Label><Num>109.2<Unit>万</Unit></Num></StatRow>
                        <StatRow><Label>外盘</Label><Num $c={RED}>559765</Num><i /><Label>内盘</Label><Num $c={GREEN}>532689</Num></StatRow>
                    </Section>

                    <Section $h={92} $rh={28.4} $top={2}>
                        <StatRow><Label>换手</Label><Num>16.40%</Num><i /><Label>股本</Label><Num>8.83<Unit>亿</Unit></Num></StatRow>
                        <StatRow><Label>净资</Label><Num>1.27</Num><i /><Label>流通</Label><Num>6.66<Unit>亿</Unit></Num></StatRow>
                        <StatRow><Label>收益(三)</Label><Num>-0.200</Num><i /><Label>PE(动)</Label><Num>—</Num></StatRow>
                    </Section>

                    <Section $h={120} $rh={28.4} $top={3}>
                        {flows.map(([l, w, v, pct]) => (
                            <FlowRow key={l}>
                                <Label>{l}</Label>
                                <FlowBar $w={w} />
                                <FlowNum>{v}<Unit>亿</Unit></FlowNum>
                                <FlowNum>{pct}</FlowNum>
                            </FlowRow>
                        ))}
                    </Section>

                    <TickList>
                        {ticks.map(([time, price, qty, side, count], i) => (
                            <TickRow key={i}>
                                <Num $left>{time}</Num>
                                <Num $c={GREEN}>{price}</Num>
                                <Num $c={qty === '12230' ? PURPLE : YELLOW}>{qty}</Num>
                                <TickSide $buy={side === 'B'}>{side}</TickSide>
                                <Num $c="#989898">{count}</Num>
                            </TickRow>
                        ))}
                    </TickList>
                </QuotePanel>

                <SideStrip>
                    <StripSlot><Arrow d="M2 12l9-9v5h11v8H11v5z" /></StripSlot>
                    <StripSlot><Arrow d="M12 2l9 9h-5v11H8V11H3z" /></StripSlot>
                    <StripSlot><Arrow d="M12 22l-9-9h5V2h8v11h5z" /></StripSlot>
                    {stripIcons.map((icon, i) => <StripSlot key={i}>{icon}</StripSlot>)}
                    <StripRule />
                    {stripIcons2.map((icon, i) => <StripSlot key={i}>{icon}</StripSlot>)}
                    <StripRule />
                    {stripIcons3.map((icon, i) => <StripSlot key={i}>{icon}</StripSlot>)}
                    {['1', '5', '15', '30', '60', '日', '周', '月', 'N', '多', '季', '年'].map((t) => (
                        <StripSlot key={t} $on={t === '日'}>{t}</StripSlot>
                    ))}
                </SideStrip>
            </Body>

            <StatusBar>
                <IndexGlyph />
                {indices.map(([name, val, chg, pct, amt]) => (
                    <IndexGroup key={name}>
                        <IndexName>{name}</IndexName>
                        <IndexNum $gap={19}>{val}</IndexNum>
                        <IndexNum $gap={22}>{chg}</IndexNum>
                        <IndexNum $gap={22}>{pct}</IndexNum>
                        <span>{amt}<IndexUnit>亿</IndexUnit></span>
                    </IndexGroup>
                ))}
                <StatusRule />
                <BreadthBox>
                    <BreadthTop>
                        <BreadthCell $c="#e8e8e8" />
                        <BreadthCell $c="#f00000" />
                        <BreadthCell $c="#0a8a0a" />
                        <BreadthCell $c="#e8e8e8" />
                    </BreadthTop>
                    <BreadthDashes>
                        {Array.from({ length: 8 }, (_, i) => <Dash key={i} />)}
                    </BreadthDashes>
                </BreadthBox>
            </StatusBar>

            <Banner>
                <BannerTitle>公式指标网</BannerTitle>
                <Medal viewBox="0 0 80 81">
                    <path d="M6 50A34 34 0 0 1 74 28" fill="none" stroke="#d8654e" strokeWidth="8" />
                    <path d="M74 34A36 36 0 0 1 30 76" fill="none" stroke="#e9c84a" strokeWidth="8" />
                    <rect x="33" y="2" width="14" height="12" fill="#e9c84a" />
                    <circle cx="40" cy="7" r="3" fill="#7faad6" />
                    <text x="40" y="58" fontSize="50" fontWeight="700" textAnchor="middle" fill="#e9c84a" fontFamily='"Noto Sans CJK SC", sans-serif'>美</text>
                </Medal>
                <BannerUrl>www.9m8.cn</BannerUrl>
            </Banner>
        </Page>
    );
}
